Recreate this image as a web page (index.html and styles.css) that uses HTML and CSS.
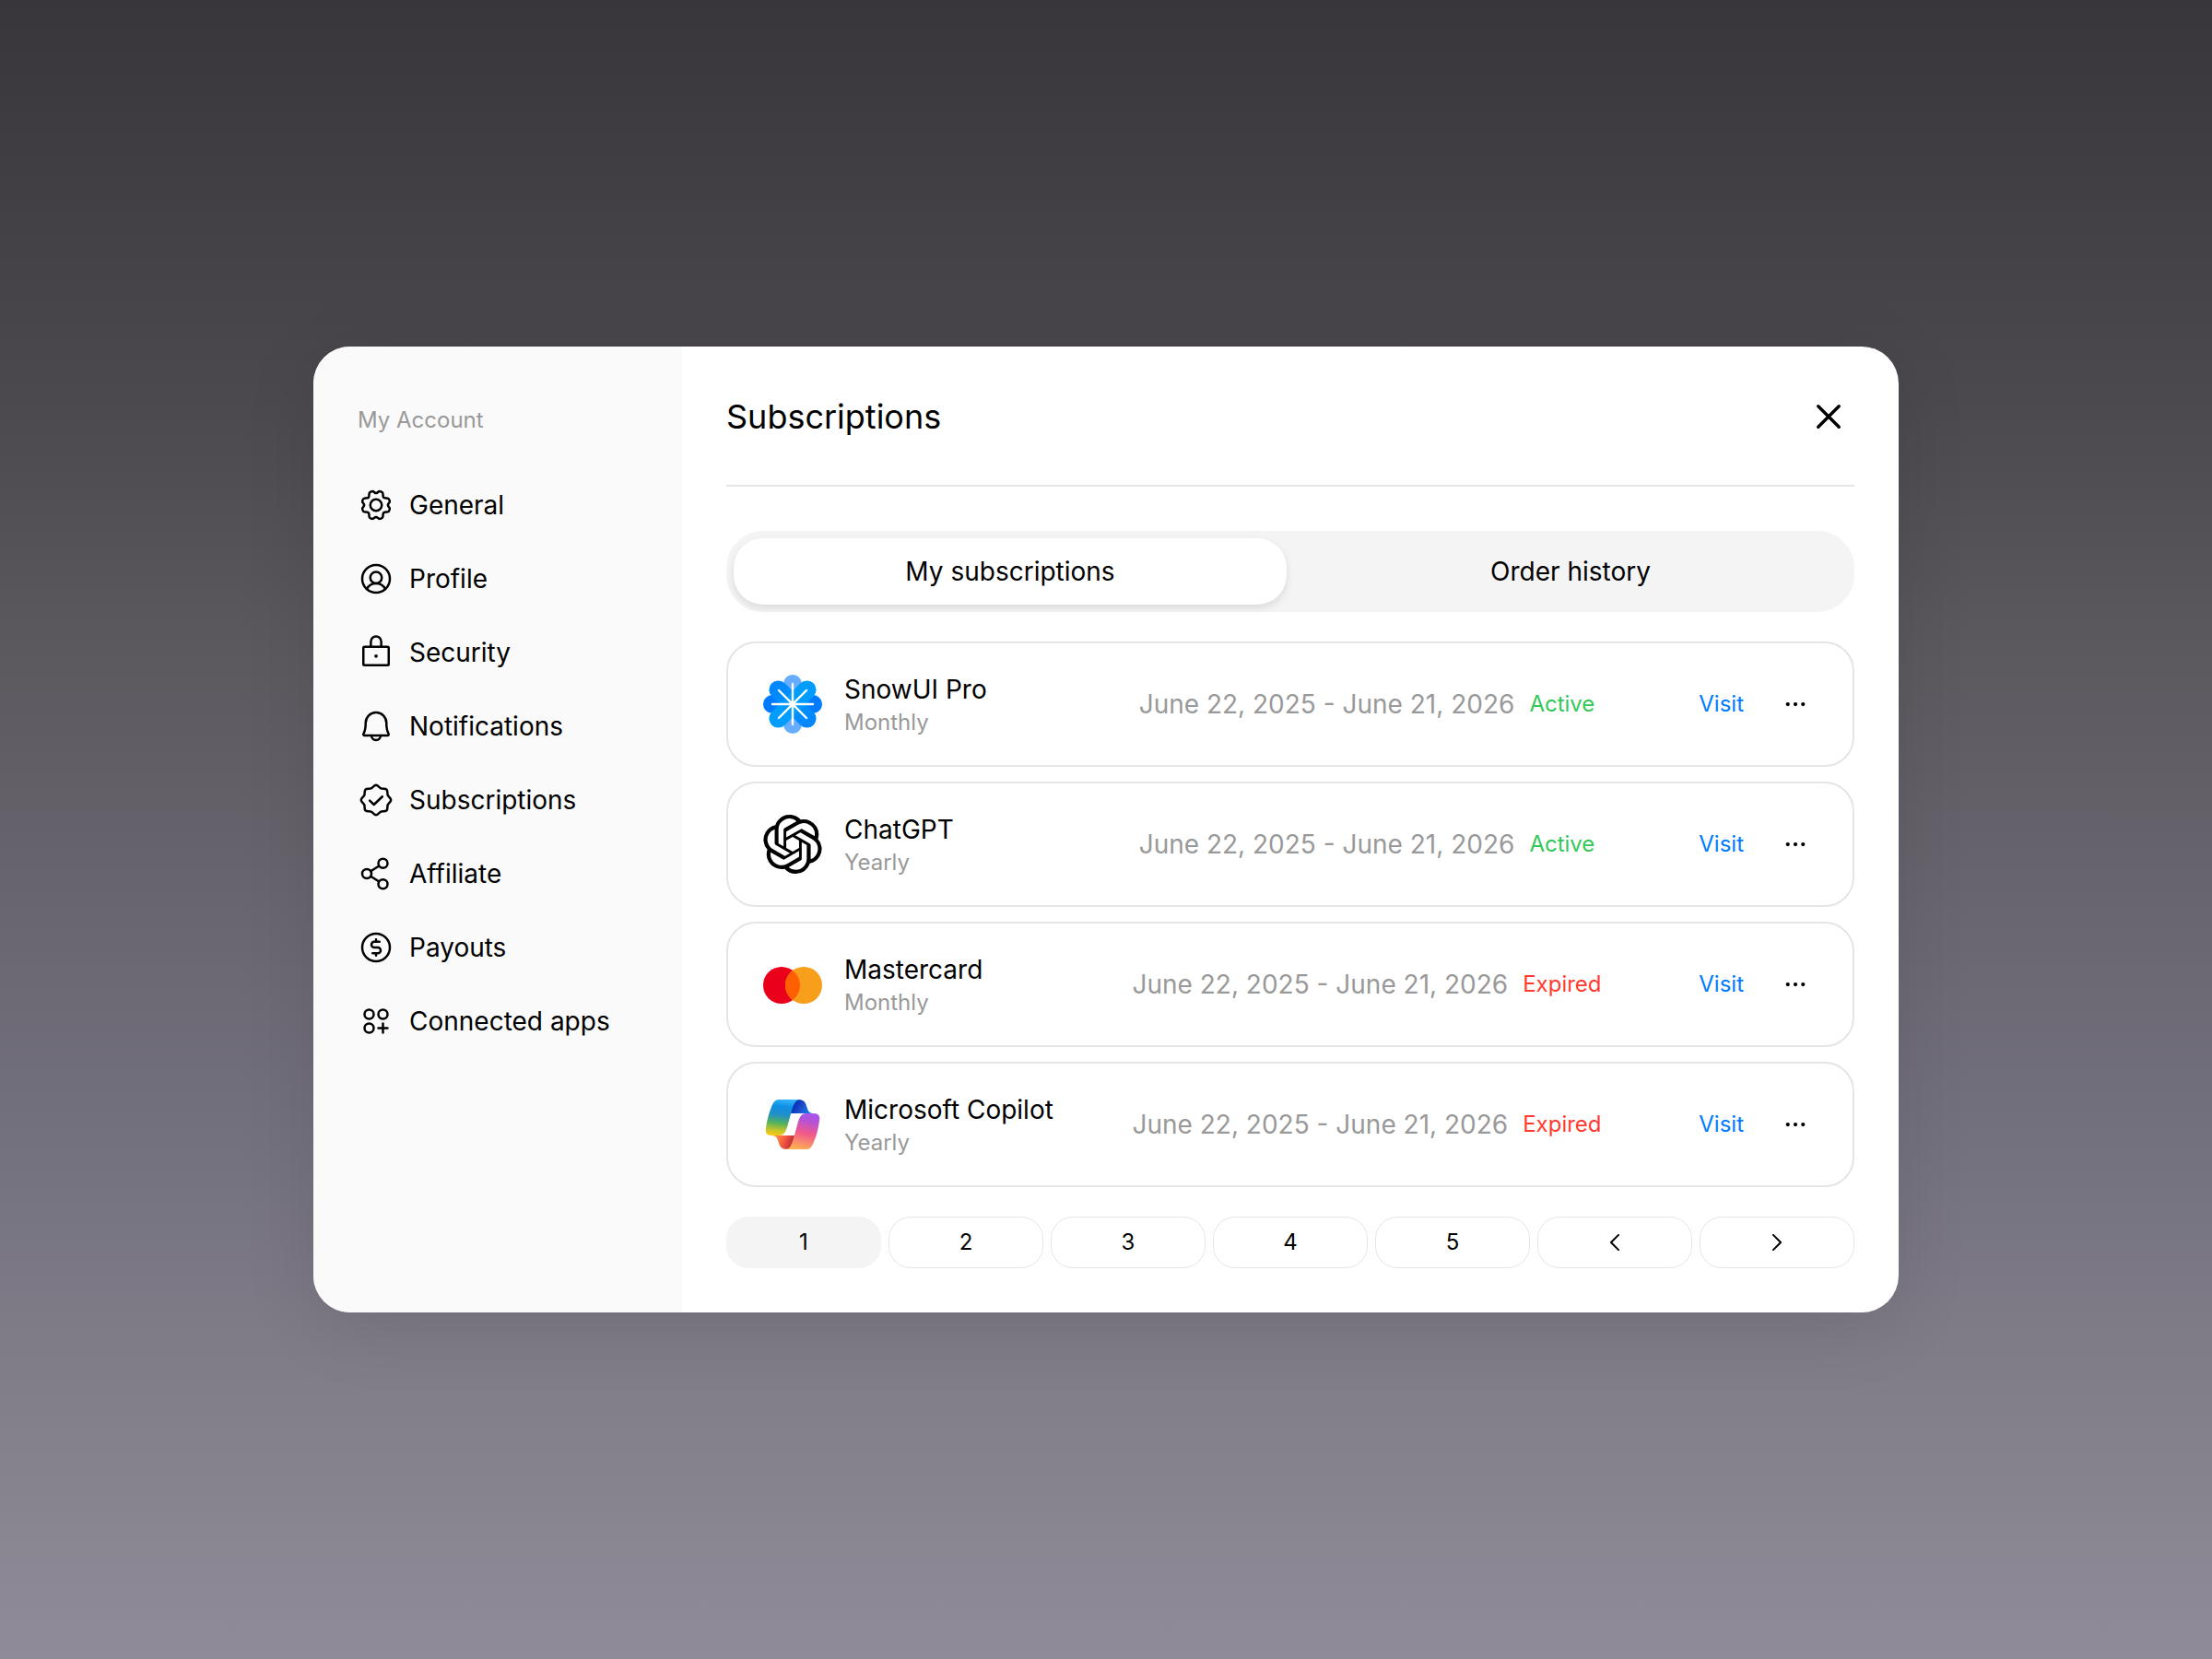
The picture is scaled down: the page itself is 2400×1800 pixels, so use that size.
FILE: index.html
```html
<!DOCTYPE html>
<html lang="en">
<head>
  <meta charset="UTF-8">
  <meta name="viewport" content="width=device-width, initial-scale=1">
  <title>Subscriptions</title>
  <link rel="stylesheet" href="styles.css">
</head>
<body>
  <!-- Shared icons -->
  <svg class="sprite" aria-hidden="true">
    <symbol id="icon-dots" viewBox="0 0 256 256">
      <circle cx="62" cy="128" r="17" fill="currentColor" stroke="none"/>
      <circle cx="128" cy="128" r="17" fill="currentColor" stroke="none"/>
      <circle cx="194" cy="128" r="17" fill="currentColor" stroke="none"/>
    </symbol>
  </svg>

  <div class="modal" role="dialog" aria-labelledby="modalTitle">
    <aside class="sidebar">
      <div class="sidebar-title">My Account</div>
      <nav class="menu">
        <a href="#general" class="menu-item">
          <svg class="icon" viewBox="0 0 256 256">
            <g transform="translate(128 128)">
              <path id="tooth" d="M0,-83Q8,-83 14,-90Q20,-98 32,-94Q46,-90 47,-82L49,-62Q50,-50 62,-49L82,-47Q90,-46 94,-32Q98,-20 90,-14Q83,-8 83,0"/>
              <use href="#tooth" transform="rotate(90)"/>
              <use href="#tooth" transform="rotate(180)"/>
              <use href="#tooth" transform="rotate(270)"/>
              <circle r="40"/>
            </g>
          </svg>
          General
        </a>
        <a href="#profile" class="menu-item">
          <svg class="icon" viewBox="0 0 256 256">
            <circle cx="128" cy="128" r="96"/>
            <circle cx="128" cy="120" r="40"/>
            <path d="M63.8,199.4a72,72,0,0,1,128.4,0"/>
          </svg>
          Profile
        </a>
        <a href="#security" class="menu-item">
          <svg class="icon" viewBox="0 0 256 256">
            <rect x="40" y="88" width="176" height="128" rx="8"/>
            <path d="M92,88V52a36,36,0,0,1,72,0V88"/>
            <circle cx="128" cy="152" r="12" fill="currentColor" stroke="none"/>
          </svg>
          Security
        </a>
        <a href="#notifications" class="menu-item">
          <svg class="icon" viewBox="0 0 256 256">
            <path d="M56,104a72,72,0,0,1,144,0c0,35.8,8.3,64.6,14.9,76A8,8,0,0,1,208,192H48a8,8,0,0,1-6.9-12C47.7,168.6,56,139.8,56,104Z"/>
            <path d="M160,192a32,32,0,0,1-64,0"/>
          </svg>
          Notifications
        </a>
        <a href="#subscriptions" class="menu-item">
          <svg class="icon" viewBox="0 0 256 256">
            <path d="M54.5,201.5c-9.2-9.2-3.1-28.5-7.8-39.8S24,140.5,24,128s17.8-22,22.7-33.7-1.4-30.6,7.8-39.8S83,51.4,94.3,46.7,115.5,24,128,24s22,17.8,33.7,22.7,30.6-1.4,39.8,7.8,3.1,28.5,7.8,39.8S232,115.5,232,128s-17.8,22-22.7,33.7,1.4,30.6-7.8,39.8-28.5,3.1-39.8,7.8S140.5,232,128,232s-22-17.8-33.7-22.7S63.7,210.7,54.5,201.5Z"/>
            <polyline points="172 104 113.3 160 84 132"/>
          </svg>
          Subscriptions
        </a>
        <a href="#affiliate" class="menu-item">
          <svg class="icon" viewBox="0 0 256 256">
            <circle cx="64" cy="128" r="32"/>
            <circle cx="176" cy="56" r="32"/>
            <circle cx="176" cy="200" r="32"/>
            <path d="M149.1,73.3L90.9,110.7M90.9,145.3l58.2,37.4"/>
          </svg>
          Affiliate
        </a>
        <a href="#payouts" class="menu-item">
          <svg class="icon" viewBox="0 0 256 256">
            <circle cx="128" cy="128" r="96"/>
            <path d="M128,72V88M128,168v16M104,168h36a20,20,0,0,0,0-40H116a20,20,0,0,1,0-40h36"/>
          </svg>
          Payouts
        </a>
        <a href="#apps" class="menu-item">
          <svg class="icon" viewBox="0 0 256 256">
            <circle cx="80" cy="80" r="32"/>
            <circle cx="176" cy="80" r="32"/>
            <circle cx="80" cy="176" r="32"/>
            <path d="M144,176h64M176,144v64"/>
          </svg>
          Connected apps
        </a>
      </nav>
    </aside>

    <main class="content">
      <header class="header">
        <h1 class="title" id="modalTitle">Subscriptions</h1>
        <button type="button" class="close-button" aria-label="Close">
          <svg class="icon" viewBox="0 0 256 256"><path d="M200,56L56,200M56,56L200,200"/></svg>
        </button>
      </header>

      <div class="tabs" role="tablist">
        <button type="button" class="tab active" role="tab" aria-selected="true">My subscriptions</button>
        <button type="button" class="tab" role="tab" aria-selected="false">Order history</button>
      </div>

      <ul class="subscriptions">
        <li class="card">
          <svg class="logo" viewBox="0 0 64 64">
            <defs>
              <linearGradient id="petalDark" x1="0" x2="1">
                <stop offset="0" stop-color="#0085ff"/>
                <stop offset=".5" stop-color="#0094ff"/>
                <stop offset="1" stop-color="#0085ff"/>
              </linearGradient>
            </defs>
            <rect x="22" width="20" height="64" rx="10" fill="#66adff"/>
            <rect y="22" width="64" height="20" rx="10" fill="#007aff"/>
            <rect y="22" width="64" height="20" rx="10" fill="url(#petalDark)" transform="rotate(45 32 32)"/>
            <rect y="22" width="64" height="20" rx="10" fill="#009dff" transform="rotate(-45 32 32)"/>
            <path d="M32,10V54M10,32H54M17,17L47,47M47,17L17,47" stroke="#fff" stroke-width="2.4" stroke-linecap="round"/>
            <circle cx="32" cy="32" r="3.4" fill="#fff"/>
          </svg>
          <div class="info">
            <div class="name">SnowUI Pro</div>
            <div class="cycle">Monthly</div>
          </div>
          <div class="period">
            <span class="dates">June 22, 2025 - June 21, 2026</span>
            <span class="status status-active">Active</span>
          </div>
          <div class="actions">
            <a href="#snowui" class="visit">Visit</a>
            <button type="button" class="more-button" aria-label="More"><svg><use href="#icon-dots"/></svg></button>
          </div>
        </li>
        <li class="card">
          <svg class="logo" viewBox="0 0 24 24">
            <path d="M22.2819 9.8211a5.9847 5.9847 0 0 0-.5157-4.9108 6.0462 6.0462 0 0 0-6.5098-2.9A6.0651 6.0651 0 0 0 4.9807 4.1818a5.9847 5.9847 0 0 0-3.9977 2.9 6.0462 6.0462 0 0 0 .7427 7.0966 5.98 5.98 0 0 0 .511 4.9107 6.051 6.051 0 0 0 6.5146 2.9001A5.9847 5.9847 0 0 0 13.2599 24a6.0557 6.0557 0 0 0 5.7718-4.2058 5.9894 5.9894 0 0 0 3.9977-2.9001 6.0557 6.0557 0 0 0-.7475-7.0729zm-9.022 12.6081a4.4755 4.4755 0 0 1-2.8764-1.0408l.1419-.0804 4.7783-2.7582a.7948.7948 0 0 0 .3927-.6813v-6.7369l2.02 1.1686a.071.071 0 0 1 .038.052v5.5826a4.504 4.504 0 0 1-4.4945 4.4944zm-9.6607-4.1254a4.4708 4.4708 0 0 1-.5346-3.0137l.142.0852 4.783 2.7582a.7712.7712 0 0 0 .7806 0l5.8428-3.3685v2.3324a.0804.0804 0 0 1-.0332.0615L9.74 19.9502a4.4992 4.4992 0 0 1-6.1408-1.6464zM2.3408 7.8956a4.485 4.485 0 0 1 2.3655-1.9728V11.6a.7664.7664 0 0 0 .3879.6765l5.8144 3.3543-2.0201 1.1685a.0757.0757 0 0 1-.071 0l-4.8303-2.7865A4.504 4.504 0 0 1 2.3408 7.872zm16.5963 3.8558L13.1038 8.364 15.1192 7.2a.0757.0757 0 0 1 .071 0l4.8303 2.7913a4.4944 4.4944 0 0 1-.6765 8.1042v-5.6772a.79.79 0 0 0-.407-.667zm2.0107-3.0231l-.142-.0852-4.7735-2.7818a.7759.7759 0 0 0-.7854 0L9.409 9.2297V6.8974a.0662.0662 0 0 1 .0284-.0615l4.8303-2.7866a4.4992 4.4992 0 0 1 6.6802 4.66zM8.3065 12.863l-2.02-1.1638a.0804.0804 0 0 1-.038-.0567V6.0742a4.4992 4.4992 0 0 1 7.3757-3.4537l-.142.0805L8.704 5.459a.7948.7948 0 0 0-.3927.6813zm1.0976-2.3654l2.602-1.4998 2.6069 1.4998v2.9994l-2.5974 1.4997-2.6067-1.4997Z"/>
          </svg>
          <div class="info">
            <div class="name">ChatGPT</div>
            <div class="cycle">Yearly</div>
          </div>
          <div class="period">
            <span class="dates">June 22, 2025 - June 21, 2026</span>
            <span class="status status-active">Active</span>
          </div>
          <div class="actions">
            <a href="#chatgpt" class="visit">Visit</a>
            <button type="button" class="more-button" aria-label="More"><svg><use href="#icon-dots"/></svg></button>
          </div>
        </li>
        <li class="card">
          <svg class="logo" viewBox="0 0 64 64">
            <circle cx="20" cy="33" r="20" fill="#eb001b"/>
            <circle cx="44" cy="33" r="20" fill="#f79e1b"/>
            <path d="M32,17a20,20,0,0,1,0,32a20,20,0,0,1,0-32Z" fill="#ff5f00"/>
          </svg>
          <div class="info">
            <div class="name">Mastercard</div>
            <div class="cycle">Monthly</div>
          </div>
          <div class="period">
            <span class="dates">June 22, 2025 - June 21, 2026</span>
            <span class="status status-expired">Expired</span>
          </div>
          <div class="actions">
            <a href="#mastercard" class="visit">Visit</a>
            <button type="button" class="more-button" aria-label="More"><svg><use href="#icon-dots"/></svg></button>
          </div>
        </li>
        <li class="card">
          <svg class="logo" viewBox="0 0 64 64">
            <defs>
              <linearGradient id="ribbonBlue" gradientUnits="userSpaceOnUse" x1="24" y1="5" x2="19" y2="45">
                <stop offset="0" stop-color="#33b3fa"/>
                <stop offset=".2" stop-color="#0f8ee4"/>
                <stop offset=".42" stop-color="#2290c8"/>
                <stop offset=".65" stop-color="#52b15c"/>
                <stop offset=".85" stop-color="#c3c52a"/>
                <stop offset="1" stop-color="#ffca10"/>
              </linearGradient>
              <linearGradient id="ribbonPink" gradientUnits="userSpaceOnUse" x1="48" y1="19" x2="38" y2="59">
                <stop offset="0" stop-color="#a855ee"/>
                <stop offset=".2" stop-color="#b452d8"/>
                <stop offset=".55" stop-color="#f2598a"/>
                <stop offset="1" stop-color="#ffb152"/>
              </linearGradient>
              <linearGradient id="foldBlue" gradientUnits="userSpaceOnUse" x1="36" y1="10" x2="50" y2="20">
                <stop offset="0" stop-color="#0b35bd"/>
                <stop offset=".5" stop-color="#2057d0"/>
                <stop offset="1" stop-color="#0a82e8"/>
              </linearGradient>
              <linearGradient id="foldRed" gradientUnits="userSpaceOnUse" x1="14" y1="46" x2="30" y2="52">
                <stop offset="0" stop-color="#ff8a4a"/>
                <stop offset=".5" stop-color="#f8603f"/>
                <stop offset="1" stop-color="#c9333b"/>
              </linearGradient>
            </defs>
            <path d="M38,5C44,5 46,8 47,12C49,18 50,20 55,20H29C32,12 33,6 38,5Z" fill="url(#foldBlue)"/>
            <path d="M26,59C20,59 18,56 17,52C15,46 14,44 9,44H35C32,52 31,58 26,59Z" fill="url(#foldRed)"/>
            <path d="M17,5H40C35,5 33,10 31,17L26,35C24,41 22,44 17,44H9C4,44 2,41 3,36C4,28 6,20 9,13C11,8 13,5 17,5Z" fill="url(#ribbonBlue)"/>
            <path d="M47,59H24C29,59 31,54 33,47L38,29C40,23 42,20 47,20H55C60,20 62,23 61,28C60,36 58,44 55,51C53,56 51,59 47,59Z" fill="url(#ribbonPink)"/>
          </svg>
          <div class="info">
            <div class="name">Microsoft Copilot</div>
            <div class="cycle">Yearly</div>
          </div>
          <div class="period">
            <span class="dates">June 22, 2025 - June 21, 2026</span>
            <span class="status status-expired">Expired</span>
          </div>
          <div class="actions">
            <a href="#copilot" class="visit">Visit</a>
            <button type="button" class="more-button" aria-label="More"><svg><use href="#icon-dots"/></svg></button>
          </div>
        </li>
      </ul>

      <nav class="pagination" aria-label="Pages">
        <button type="button" class="page active">1</button>
        <button type="button" class="page">2</button>
        <button type="button" class="page">3</button>
        <button type="button" class="page">4</button>
        <button type="button" class="page">5</button>
        <button type="button" class="page" aria-label="Previous">
          <svg class="icon" viewBox="0 0 256 256"><path d="M168,208L88,128L168,48"/></svg>
        </button>
        <button type="button" class="page" aria-label="Next">
          <svg class="icon" viewBox="0 0 256 256"><path d="M88,48L168,128L88,208"/></svg>
        </button>
      </nav>
    </main>
  </div>
</body>
</html>
```
FILE: styles.css
```css
* {
  box-sizing: border-box;
}

body {
  min-height: 100vh;
  margin: 0;
  display: flex;
  align-items: center;
  justify-content: center;
  background: linear-gradient(180deg, #38363a 0%, #4c4a4f 25%, #5b585e 39%, #67646e 53%, #757280 70%, #85818b 87%, #8f8b99 100%);
  color: #000;
  font-family: Inter, 'Liberation Sans', sans-serif;
  font-size: 28px;
  line-height: 40px;
}

button {
  padding: 0;
  border: none;
  background: none;
  color: inherit;
  font: inherit;
  cursor: pointer;
}

a {
  color: inherit;
  text-decoration: none;
}

.sprite {
  display: none;
}

.icon {
  flex: none;
  width: 40px;
  height: 40px;
  fill: none;
  stroke: currentColor;
  stroke-width: 16;
  stroke-linecap: round;
  stroke-linejoin: round;
}

.modal {
  display: flex;
  width: 90%;
  max-width: 1720px;
  border-radius: 40px;
  overflow: hidden;
  background-color: #fff;
  box-shadow: 0 16px 80px rgba(0, 0, 0, 0.1);
}

/* Sidebar */
.sidebar {
  flex: none;
  width: 400px;
  padding: 48px;
  background-color: #fafafa;
}

.sidebar-title {
  margin-bottom: 20px;
  color: #999;
  font-size: 24px;
  line-height: 64px;
}

.menu-item {
  display: flex;
  align-items: center;
  gap: 16px;
  height: 80px;
}

/* Content */
.content {
  flex: 1;
  min-width: 0;
  padding: 48px;
}

.header {
  display: flex;
  align-items: center;
  justify-content: space-between;
  padding-bottom: 46px;
  margin-bottom: 48px;
  border-bottom: 2px solid #e5e5e5;
}

.title {
  margin: 0;
  font-size: 36px;
  font-weight: 400;
  line-height: 56px;
}

.close-button {
  display: flex;
  align-items: center;
  justify-content: center;
  width: 56px;
  height: 56px;
}

.close-button .icon {
  stroke-width: 22;
}

.tabs {
  display: flex;
  gap: 8px;
  margin-bottom: 32px;
  padding: 8px;
  border-radius: 40px;
  background-color: #f4f4f4;
}

.tab {
  flex: 1;
  height: 72px;
  border-radius: 32px;
}

.tab.active {
  background-color: #fff;
  box-shadow: 0 4px 8px rgba(0, 0, 0, 0.1);
}

.subscriptions {
  display: flex;
  flex-direction: column;
  gap: 16px;
  margin: 0 0 32px;
  padding: 0;
  list-style: none;
}

.card {
  display: flex;
  align-items: center;
  height: 136px;
  padding: 0 38px;
  border: 2px solid #e5e5e5;
  border-radius: 32px;
}

.logo {
  flex: none;
  width: 64px;
  height: 64px;
  margin-right: 24px;
}

.info {
  flex: 1;
}

.cycle {
  color: #999;
  font-size: 24px;
  line-height: 32px;
}

.period {
  display: flex;
  align-items: center;
  justify-content: center;
  gap: 16px;
  width: 510px;
  white-space: nowrap;
}

.dates {
  color: #999;
}

.status {
  font-size: 24px;
}

.status-active {
  color: #34c759;
}

.status-expired {
  color: #ff3b30;
}

.actions {
  display: flex;
  align-items: center;
  justify-content: flex-end;
  gap: 32px;
  width: 234px;
}

.visit {
  color: #007aff;
  font-size: 24px;
}

.more-button {
  display: flex;
  align-items: center;
  justify-content: center;
  width: 48px;
  height: 48px;
}

.more-button svg {
  width: 32px;
  height: 32px;
}

.pagination {
  display: flex;
  gap: 8px;
}

.page {
  display: flex;
  flex: 1;
  align-items: center;
  justify-content: center;
  height: 56px;
  border: 1px solid #e5e5e5;
  border-radius: 24px;
  font-size: 24px;
}

.page.active {
  border-color: #f4f4f4;
  background-color: #f4f4f4;
}

.page .icon {
  width: 26px;
  height: 26px;
  stroke-width: 20;
}
```
